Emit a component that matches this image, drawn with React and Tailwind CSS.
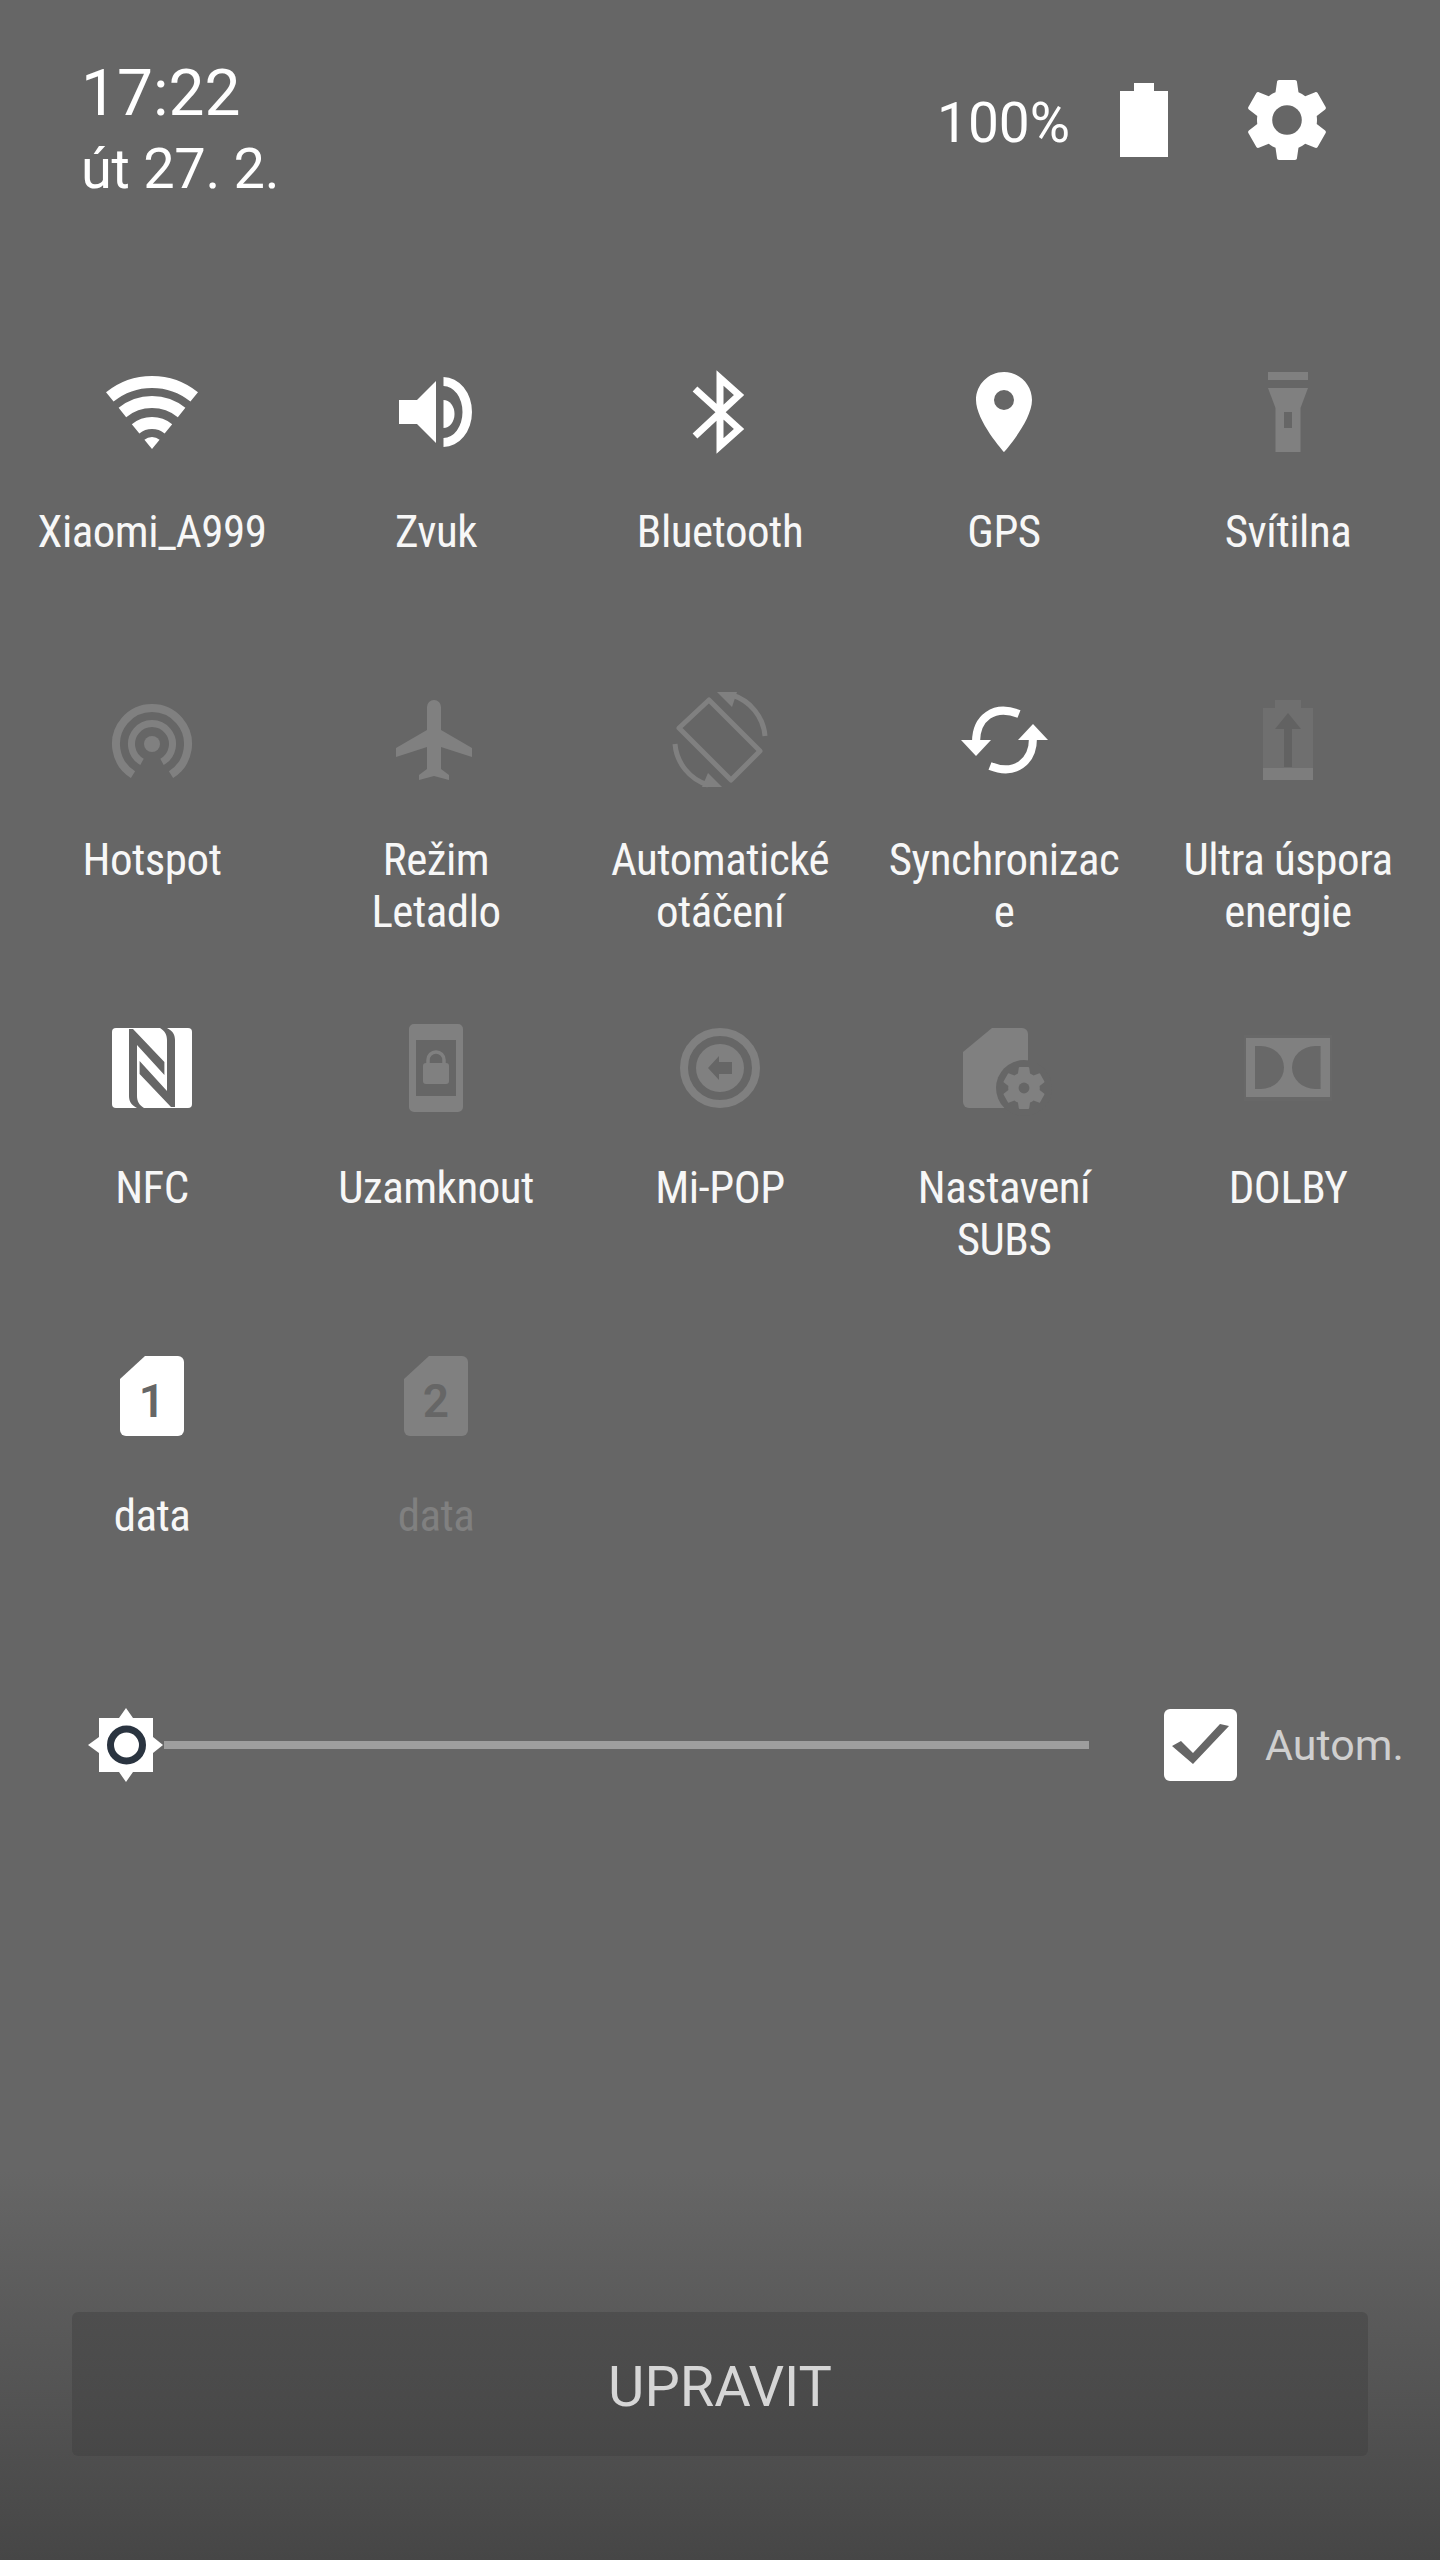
import React from 'react';

const ON = '#ffffff';
const OFF = '#808080';
const BG = '#666666';

const GEAR_PATH =
  'M19.43 12.98c.04-.32.07-.64.07-.98s-.03-.66-.07-.98l2.11-1.65c.19-.15.24-.42.12-.64l-2-3.46c-.12-.22-.39-.3-.61-.22l-2.49 1c-.52-.4-1.08-.73-1.69-.98l-.38-2.65C14.46 2.18 14.25 2 14 2h-4c-.25 0-.46.18-.49.42l-.38 2.65c-.61.25-1.17.59-1.69.98l-2.49-1c-.23-.09-.49 0-.61.22l-2 3.46c-.13.22-.07.49.12.64l2.11 1.65c-.04.32-.07.65-.07.98s.03.66.07.98l-2.11 1.65c-.19.15-.24.42-.12.64l2 3.46c.12.22.39.3.61.22l2.49-1c.52.4 1.08.73 1.69.98l.38 2.65c.03.24.24.42.49.42h4c.25 0 .46-.18.49-.42l.38-2.65c.61-.25 1.17-.59 1.69-.98l2.49 1c.23.09.49 0 .61-.22l2-3.46c.12-.22.07-.49-.12-.64l-2.11-1.65z';

function Glyph({ children }) {
  return (
    <svg viewBox="0 0 120 120" className="w-[120px] h-[120px] overflow-visible">
      {children}
    </svg>
  );
}

const Wifi = () => (
  <Glyph>
    <g fill="none" stroke={ON} strokeWidth="12">
      <path d="M17.8 44.9A67 67 0 0 1 102.2 44.9" />
      <path d="M30.4 60.5A47 47 0 0 1 89.6 60.5" />
      <path d="M43.6 76.8A26 26 0 0 1 76.4 76.8" />
    </g>
    <path d="M60 97L52.4 87.7A12 12 0 0 1 67.6 87.7Z" fill={ON} />
  </Glyph>
);

const Speaker = () => (
  <Glyph>
    <path fill={ON} d="M23 48H41L60 29V91L41 72H23Z" />
    <path fill={ON} d="M67.5 48A11 14 0 0 1 67.5 76Z" />
    <path fill={ON} d="M67.5 25A28.5 35 0 0 1 67.5 95V86A19 26 0 0 0 67.5 34Z" />
  </Glyph>
);

const Bluetooth = () => (
  <Glyph>
    <path fill="none" stroke={ON} strokeWidth="7" d="M35 37L79 77L60 94V26L79 43L35 84" />
  </Glyph>
);

const Pin = () => (
  <Glyph>
    <path
      fill={ON}
      fillRule="evenodd"
      d="M60 20C44.5 20 32 32.5 32 48C32 69 60 100 60 100C60 100 88 69 88 48C88 32.5 75.5 20 60 20ZM60 38A10 10 0 1 1 60 58A10 10 0 1 1 60 38Z"
    />
  </Glyph>
);

const Flashlight = () => (
  <Glyph>
    <path fill={OFF} d="M40 20H80V28H40Z" />
    <path
      fill={OFF}
      fillRule="evenodd"
      d="M40 36H80L72.5 56V100H47.5V56ZM56 60V76H64V60Z"
    />
  </Glyph>
);

const Hotspot = () => (
  <Glyph>
    <g fill="none" stroke={OFF}>
      <path strokeWidth="8" d="M41 94.6A36 36 0 1 1 79 94.6" />
      <path strokeWidth="7" d="M50 81.9A20.5 20.5 0 1 1 70 81.9" />
    </g>
    <circle cx="60" cy="64" r="8" fill={OFF} />
  </Glyph>
);

const Plane = () => (
  <Glyph>
    <path
      fill={OFF}
      d="M51 27a7 7 0 0 1 14 0V50L96 68V77L65 67V89L73 95V100L58 96L43 100V95L51 89V67L20 77V68L51 50Z"
    />
  </Glyph>
);

const Rotate = () => (
  <Glyph>
    <path
      fill="none"
      stroke={OFF}
      strokeWidth="5"
      strokeLinejoin="round"
      d="M49 20L100 71L71 100L19 48Z"
    />
    <g fill="none" stroke={OFF} strokeWidth="5">
      <path d="M72 15A47 47 0 0 1 105 56" />
      <path d="M15 64A47 47 0 0 0 48 105" />
    </g>
    <path fill={OFF} d="M57 12H77L72 27Z" />
    <path fill={OFF} d="M62 107H42L48 93Z" />
  </Glyph>
);

const Sync = () => (
  <Glyph>
    <g fill="none" stroke={ON} strokeWidth="8">
      <path d="M75 34C50 24 32 38 32 62" />
      <path d="M46 86C71 96 89 82 89 58" />
    </g>
    <path fill={ON} d="M17 60H47L32 76Z" />
    <path fill={ON} d="M104 60H74L89 44Z" />
  </Glyph>
);

const BatterySaver = () => (
  <Glyph>
    <path fill="#6f6f6f" d="M47 20H73V28H85V88H35V28H47Z" />
    <path fill="#7d7d7d" d="M35 88H85V100H35Z" />
    <path fill="#626262" d="M60 33L73 49H64V87H56V49H47Z" />
  </Glyph>
);

const Nfc = () => (
  <Glyph>
    <rect x="20" y="20" width="80" height="80" rx="4" fill={ON} />
    <path
      fill={BG}
      d="M37 21H41L72.4 54V67L45 37V88C45 93 47 97 52 100H45C39 97 37 93 37 88Z"
    />
    <path
      fill={BG}
      d="M83 99H79L47.6 66V53L75 83V32C75 27 73 23 68 20H75C81 23 83 27 83 32Z"
    />
  </Glyph>
);

const LockPhone = () => (
  <Glyph>
    <path
      fill={OFF}
      fillRule="evenodd"
      d="M38 16H82A5 5 0 0 1 87 21V99A5 5 0 0 1 82 104H38A5 5 0 0 1 33 99V21A5 5 0 0 1 38 16ZM40 32V88H80V32Z"
    />
    <rect x="47" y="55" width="26" height="21" rx="3" fill={OFF} />
    <path fill="none" stroke={OFF} strokeWidth="3.5" d="M52 56V52A8 8 0 0 1 68 52V56" />
  </Glyph>
);

const MiPop = () => (
  <Glyph>
    <circle cx="60" cy="60" r="36" fill="none" stroke={OFF} strokeWidth="8" />
    <circle cx="60" cy="60" r="24" fill={OFF} />
    <path fill={BG} d="M48 60L59 48V54H72V66H59V72Z" />
  </Glyph>
);

const SimSettings = () => (
  <Glyph>
    <path fill={OFF} d="M48 20H78A6 6 0 0 1 84 26V94A6 6 0 0 1 78 100H25A6 6 0 0 1 19 94V44Z" />
    <circle cx="80" cy="80" r="28" fill={BG} />
    <svg x="59" y="59" width="42" height="42" viewBox="2 2 20 20" overflow="visible">
      <path fill={OFF} d={GEAR_PATH} />
      <circle cx="12" cy="12" r="2.6" fill={BG} />
    </svg>
  </Glyph>
);

const Dolby = () => (
  <Glyph>
    <rect x="16" y="27" width="88" height="66" fill="#686868" />
    <path
      fill={OFF}
      fillRule="evenodd"
      d="M18 30H102V89H18ZM27 38V81H33A23 21.5 0 0 0 33 38ZM92.6 38H87A23 21.5 0 0 0 87 81H92.6Z"
    />
  </Glyph>
);

const Sim = ({ n, fill }) => (
  <Glyph>
    <path fill={fill} d="M53 20H86A6 6 0 0 1 92 26V94A6 6 0 0 1 86 100H34A6 6 0 0 1 28 94V43Z" />
    <text
      x="60"
      y="81"
      textAnchor="middle"
      fontFamily="Roboto, sans-serif"
      fontWeight="600"
      fontSize="46"
      fill={BG}
    >
      {n}
    </text>
  </Glyph>
);

const tiles = [
  { icon: Wifi, label: 'Xiaomi_A999' },
  { icon: Speaker, label: 'Zvuk' },
  { icon: Bluetooth, label: 'Bluetooth' },
  { icon: Pin, label: 'GPS' },
  { icon: Flashlight, label: 'Svítilna' },
  { icon: Hotspot, label: 'Hotspot' },
  { icon: Plane, label: ['Režim', 'Letadlo'] },
  { icon: Rotate, label: ['Automatické', 'otáčení'] },
  { icon: Sync, label: ['Synchronizac', 'e'] },
  { icon: BatterySaver, label: ['Ultra úspora', 'energie'] },
  { icon: Nfc, label: 'NFC' },
  { icon: LockPhone, label: 'Uzamknout' },
  { icon: MiPop, label: 'Mi-POP' },
  { icon: SimSettings, label: ['Nastavení', 'SUBS'] },
  { icon: Dolby, label: 'DOLBY' },
  { icon: () => <Sim n="1" fill={ON} />, label: 'data' },
  { icon: () => <Sim n="2" fill={OFF} />, label: 'data', dim: true },
];

function Tile({ icon: Icon, label, dim }) {
  const lines = Array.isArray(label) ? label : [label];
  return (
    <div className="flex flex-col items-center">
      <Icon />
      <div
        className={`mt-[34px] text-center text-[45px] leading-[52px] tracking-[-0.5px] font-stretch-condensed whitespace-nowrap ${
          dim ? 'text-[#808080]' : 'text-[#f7f7f7]'
        }`}
      >
        {lines.map((l, i) => (
          <div key={i}>{l}</div>
        ))}
      </div>
    </div>
  );
}

export default function App() {
  return (
    <div className="w-[1440px] h-[2560px] overflow-hidden flex flex-col font-['Roboto',sans-serif] bg-[linear-gradient(to_bottom,#666666_0,#666666_2170px,#464646_2560px)]">
      {/* Header */}
      <div className="h-[352px] pt-[56px] pl-[81px] pr-[113px] flex justify-between items-start">
        <div className="text-white">
          <div className="text-[64px] leading-[76px]">17:22</div>
          <div className="text-[56px] leading-[70px] mt-[2px] tracking-[-0.3px]">út 27. 2.</div>
        </div>
        <div className="flex items-center text-white mt-[24px]">
          <span className="text-[55px] leading-[70px] mr-[50px] pt-[5px]">100%</span>
          <svg viewBox="0 0 48 74" className="w-[48px] h-[74px] mr-[79px]">
            <path fill={ON} d="M14 0H34V8H48V74H0V8H14Z" />
          </svg>
          <svg viewBox="2 2 20 20" className="w-[80px] h-[80px]">
            <path fill={ON} d={GEAR_PATH} />
            <circle cx="12" cy="12" r="3.7" fill={BG} />
          </svg>
        </div>
      </div>

      {/* Quick tiles */}
      <div className="ml-[10px] w-[1420px] grid grid-cols-5 auto-rows-[328px]">
        {tiles.map((t, i) => (
          <Tile key={i} {...t} />
        ))}
      </div>

      {/* Brightness */}
      <div className="mt-[44px] pl-[88px] flex items-center h-[74px]">
        <svg viewBox="0 0 76 74" className="w-[76px] h-[74px] shrink-0">
          <path
            fill={ON}
            d="M38 0L45 10H65V29L75 37L65 45V64H45L38 74L31 64H11V45L0 37L11 29V10H31Z"
          />
          <circle cx="38.5" cy="37" r="16" fill="none" stroke="#2a3440" strokeWidth="7" />
        </svg>
        <div className="w-[925px] h-[8px] bg-[#9e9e9e]" />
        <div className="ml-[75px] w-[73px] h-[72px] rounded-[6px] bg-white shrink-0">
          <svg viewBox="0 0 73 72" className="w-full h-full">
            <path fill={BG} d="M8 37L17 32L29 44L56 15L65 17L29 55Z" />
          </svg>
        </div>
        <span className="ml-[28px] text-[43px] text-[#cfcfcf]">Autom.</span>
      </div>

      {/* Edit */}
      <div className="mt-auto mb-[104px] mx-[72px] h-[144px] pt-[6px] rounded-[6px] bg-[linear-gradient(to_bottom,#4e4e4e,#474747)] flex items-center justify-center">
        <span className="text-[56px] text-[#d6d6d6]">UPRAVIT</span>
      </div>
    </div>
  );
}
